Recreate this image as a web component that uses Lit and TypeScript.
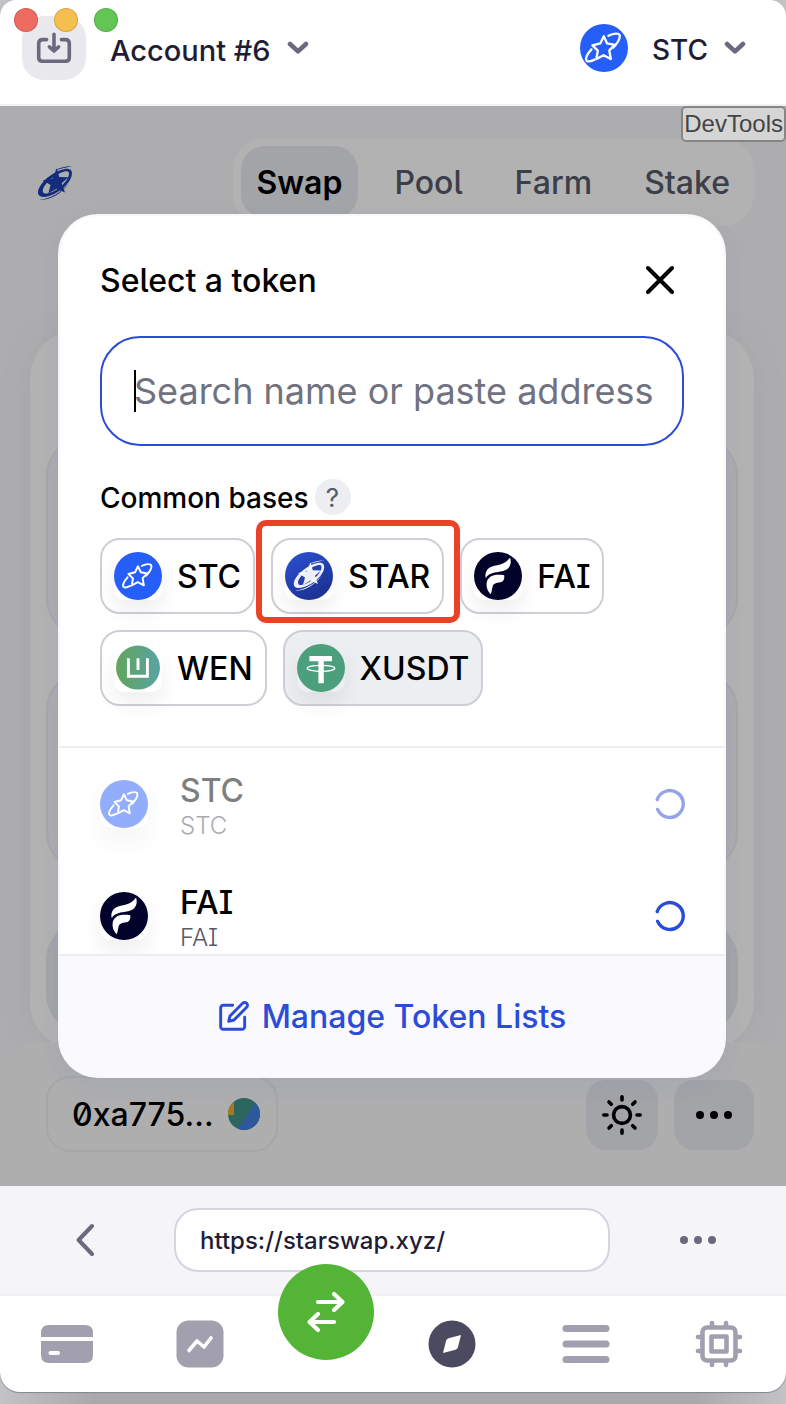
import { LitElement, html, css, svg } from "lit";
import { customElement, property } from "lit/decorators.js";
import { classMap } from "lit/directives/class-map.js";

type Token = "STC" | "STAR" | "FAI" | "WEN" | "XUSDT";

const starRing = svg`
  <path fill-rule="evenodd" d="M38.4 12.2C40.8 15.8 37.6 22.6 31.6 27.8C25.4 33.2 15.6 37.8 10.8 35.4C7 33.4 9 27.6 12.8 23.2C17.4 17.8 26 12 32.6 11C35.2 10.6 37.4 11 38.4 12.2ZM36 13.4C34 11.8 27.6 14.4 22 18.6C16 23.2 11.8 29 13.4 32C15 34.6 23.2 31.600 29 26.800C34.400 22.200 38 15.800 36 13.400Z"/>
  <path d="M10 38.6C20 37.800 30 31.800 36.600 23.600C30.400 32.800 20 39.400 10 38.600Z"/>
  <path d="M23 12.600C28 9.800 33.400 8.400 39.400 8.600C33.400 9.600 28 11 23 12.600Z"/>
  <path d="M25.600 10.500L27.800 18.200L36 18.400L30 23.800L33 32L25.400 28.600L18 33L20 25.400L13 21L21.600 19.600Z"/>`;

const orbit = svg`
  <g fill="none" stroke="#fff" stroke-width="2.3" stroke-linejoin="round" stroke-linecap="round">
    <path d="M23.8 12.2L27 19.3L34.8 20.9L29.3 26.4L30.8 35L23.6 31.2L16.4 35L17.8 26.6L12.4 21.4L20.3 19.4Z"/>
    <path d="M28.4 11.8C33.4 9.2 39.4 8.6 39.8 11.9C40.1 15 37.3 19.4 33.2 23.6"/>
    <path d="M11.4 25.4C7 30.2 4.8 35 6.8 36.8C8 37.8 11.4 37.2 14.6 35.6"/>
  </g>`;

@customElement("token-logo")
export class TokenLogo extends LitElement {
  static styles = css`
    :host { display: block; width: 48px; height: 48px; flex: none; }
    svg { display: block; width: 100%; height: 100%; }
  `;
  @property() token: Token = "STC";
  @property({ type: Boolean }) large = false;

  private art() {
    switch (this.token) {
      case "STC":
        return svg`<circle cx="24" cy="24" r="24" fill="#265ef9"/>
          ${this.large ? orbit : svg`<g transform="translate(4 4) scale(.84)">${orbit}</g>`}`;
      case "STAR":
        return svg`<defs><linearGradient id="g" x1="0.2" y1="0" x2="0.8" y2="1">
            <stop offset="0" stop-color="#2a4fce"/><stop offset="1" stop-color="#1a2f8d"/></linearGradient></defs>
          <circle cx="24" cy="24" r="24" fill="url(#g)"/><g fill="#fff" fill-opacity=".92">${starRing}</g>`;
      case "FAI":
        return svg`<circle cx="24" cy="24" r="24" fill="#02022a"/>
          <g fill="#fff">
            <path d="M36 5.4C37.4 9 36.8 13.4 34.4 16C31 19.6 26 19.4 20.4 20.6C16.4 21.6 13.4 23.4 11.8 26C10.6 21.6 12.2 17.6 16.2 15.2C20.8 12.6 31.4 13.4 36 5.4Z"/>
            <path d="M30.2 23.2C30.8 27 29.4 29.6 26.4 30.2C22 31 19.6 31.2 18.6 34.4C18 37 17.8 39.8 16.6 42.2C13.6 39.2 12.2 35.6 12.6 31.6C13 27.2 15.8 24.2 20 23.2C23.4 22.6 27 22.8 30.2 23.2Z"/>
          </g>`;
      case "WEN":
        return svg`<defs><linearGradient id="g"><stop offset="0" stop-color="#61a55c"/>
            <stop offset="1" stop-color="#58a3a2"/></linearGradient></defs>
          <circle cx="24" cy="23.6" r="22" fill="url(#g)"/>
          <path d="M14.4 14.2V32.2H33.4V14.2M24 14.2V26" fill="none" stroke="#fff" stroke-width="2.9"/>`;
      default:
        return svg`<circle cx="24" cy="24" r="24" fill="#4b9f7c"/>
          <g fill="#fff"><path d="M12.4 12H35V17.2H26.8V39.2H21.4V17.2H12.4Z"/></g>
          <ellipse cx="24" cy="24.3" rx="13.8" ry="3" fill="none" stroke="#fff" stroke-width="1.3"/>`;
    }
  }
  render() {
    return html`<svg viewBox="0 0 48 48" aria-hidden="true">${this.art()}</svg>`;
  }
}

@customElement("app-root")
export class AppRoot extends LitElement {
  static styles = css`
    :host {
      display: block;
      font-family: Inter, "Noto Sans", sans-serif;
      font-weight: 500;
      color: #000;
    }
    * { box-sizing: border-box; }
    button, input { font: inherit; color: inherit; margin: 0; }
    button { border: 0; background: none; padding: 0; cursor: pointer; font-feature-settings: inherit; }
    svg { display: block; flex: none; }
    h2, h3, p, ul { margin: 0; padding: 0; font-weight: 500; }

    .desktop {
      min-height: 100vh;
      padding-bottom: 12px;
      display: flex;
      background: linear-gradient(90deg, #c2c2c7, #a9a9ab 12%, #a9a9ab 88%, #c2c2c7);
    }
    .window {
      position: relative;
      flex: 1;
      min-width: 0;
      display: flex;
      flex-direction: column;
      background: #fff;
      border-radius: 16px 16px 20px 20px;
      overflow: hidden;
      box-shadow: 0 1px 1px #85858a;
    }
    .lights { position: absolute; left: 14px; top: 8px; display: flex; gap: 16px; }
    .light { width: 24px; height: 24px; border-radius: 50%; border: 1px solid #0002; }
    .red { background: #ed6b60; }
    .yellow { background: #f5bf4f; }
    .green { background: #62c655; }

    .topbar {
      height: 106px;
      padding: 16px 40px 24px 22px;
      display: flex;
      align-items: flex-start;
      justify-content: space-between;
      border-bottom: 2px solid #f1f0f4;
      color: #1f1d36;
      font-size: 28px;
    }
    .group { display: flex; align-items: center; height: 64px; gap: 24px; }
    .square {
      width: 64px; height: 64px; border-radius: 22px;
      background: #e9e8ec; display: grid; place-items: center;
    }
    .drop { display: flex; align-items: center; gap: 16px; height: 64px; padding-top: 4px; }
    .drop.account { font-size: 29px; }
    .drop svg { margin-bottom: 4px; }

    .webview {
      position: relative;
      flex: 1;
      min-height: 1080px;
      background: #f8f8fb;
      font-feature-settings: "ss02";
    }
    .site { display: flex; flex-direction: column; padding: 32px 32px 0 30px; gap: 104px; }
    .sitebar { display: flex; align-items: flex-start; justify-content: space-between; }
    .brand { margin: 26px 0 0 6px; }
    .tabs {
      display: flex; gap: 20px; height: 88px; padding: 8px; border-radius: 32px; background: #fff;
      font-size: 32px;
    }
    .tab {
      display: flex; align-items: center; padding: 0 16px; color: #565a69;
      text-decoration: none; border-radius: 24px;
    }
    .tab.on { background: #e9ebf0; color: #000; font-weight: 600; }
    .card {
      display: flex; flex-direction: column; gap: 32px;
      padding: 106px 16px 16px; border-radius: 48px; background: #fff;
      box-shadow: 0 0 40px #0000000d;
    }
    .pane { height: 202px; border-radius: 40px; border: 2px solid #edeef2; background: #f7f7fb; }
    .cta { height: 114px; margin-top: 16px; border-radius: 40px; background: #e9ebf0; }
    .sitefoot {
      position: absolute; left: 0; right: 0; bottom: 0; height: 144px;
      padding: 36px 32px 0 46px; display: flex; align-items: flex-start; gap: 16px;
      background: #f9f9fb; border-radius: 40px 40px 0 0;
    }
    .wallet {
      height: 76px; margin: -2px auto 0 0; padding: 0 16px 0 24px; display: flex; align-items: center; gap: 14px;
      border: 2px solid #edeef2; border-radius: 24px; font-size: 32px;
    }
    .tool {
      width: 72px; height: 70px; margin-top: 2px; border-radius: 20px; background: #e9ebf0;
      display: grid; place-items: center;
    }
    .tool.wide { width: 80px; }

    .scrim {
      position: absolute; inset: 0; padding-right: 2px; background: #0000004d;
      display: flex; align-items: center; justify-content: center;
    }
    .modal {
      width: 85.2%; height: 80%; min-height: 864px; display: flex; flex-direction: column;
      background: #fff; border: 2px solid #f7f8fa; border-radius: 40px; overflow: hidden;
      box-shadow: 0 8px 24px #2f50ed0d;
    }
    .head { padding: 40px; display: flex; flex-direction: column; }
    .titlerow { display: flex; align-items: center; justify-content: space-between; height: 48px; padding-right: 8px; }
    h2 { font-size: 32px; line-height: 48px; padding-top: 2px; }
    .search { position: relative; margin-top: 32px; }
    .search input {
      width: 100%; height: 110px; border: 2px solid #2b4bd9; border-radius: 40px;
      background: #fff; padding: 0 24px 0 32px; font-size: 36px; font-weight: 400; outline: none; display: block;
    }
    .search input::placeholder { color: #70727f; opacity: 1; }
    .caret { position: absolute; left: 34px; top: 34px; width: 2px; height: 42px; background: #000; }
    .bases { display: flex; align-items: center; gap: 6px; margin-top: 32px; height: 38px; }
    h3 { font-size: 28px; line-height: 36px; padding-top: 2px; }
    .help { width: 36px; height: 36px; border-radius: 50%; background: #edeef2; color: #565a69; font-size: 26px; font-weight: 400; display: grid; place-items: center; }
    .chips { display: flex; flex-wrap: wrap; gap: 16px; margin-top: 22px; }
    .chip {
      position: relative; display: flex; align-items: center; gap: 15px; height: 76px;
      padding: 0 12px; border: 2px solid #cdcfd7; border-radius: 20px; font-size: 32px; background: #fff;
    }
    .chip.chosen { background: #edeef2; }
    .shade { border-radius: 10px; box-shadow: 0 12px 20px #00000010; }
    .mark {
      position: absolute; inset: -20px -18px -11px -17px; border: 6px solid #eb4127;
      border-radius: 10px; pointer-events: none; z-index: 1;
    }
    .list { list-style: none; flex: 1 1 0; min-height: 0; overflow: hidden; border-top: 2px solid #edeef2; }
    .row { height: 112px; padding: 0 38px 0 40px; display: flex; align-items: center; gap: 32px; }
    .row.dim { opacity: 0.5; }
    .names { flex: 1; padding-top: 4px; }
    .sym { font-size: 32px; line-height: 40px; }
    .name { font-size: 24px; line-height: 30px; font-weight: 300; color: #565a69; }
    .manage {
      height: 122px; border-top: 2px solid #edeef2; background: #faf9fe; color: #2b4bd9;
      display: flex; align-items: center; justify-content: center; font-size: 32px; text-decoration: none; gap: 12px;
    }
    .devtools {
      position: absolute; right: 0; top: 0; height: 36px; padding: 0 1px; border: 2px solid #868686;
      border-radius: 5px; background: #d5d5d5; color: #444; font-family: "Liberation Sans", Arial, sans-serif;
      font-size: 24px; font-weight: 400; line-height: 32px;
    }

    .urlbar {
      display: grid; grid-template-columns: 174fr 436fr 176fr; align-items: center; height: 110px;
      background: #f5f5f8; border-bottom: 2px solid #f1f1f4;
    }
    .urlbar button { justify-self: center; }
    .url {
      width: 100%; height: 64px; border: 2px solid #d5d4df; border-radius: 24px; background: #fff;
      padding: 0 24px; font-size: 24px; color: #1f1d36; font-weight: 500;
    }
    .dock { display: grid; grid-template-columns: 134fr 134fr 118fr 134fr 134fr 134fr; height: 96px; }
    .dock button { display: grid; place-items: center; position: relative; }
    .dock .swap {
      width: 96px; height: 96px; margin-top: -32px; justify-self: center; border-radius: 50%; background: #53b436;
    }
  `;

  private chevron() {
    return html`<svg width="22" height="14" viewBox="0 0 22 14" fill="none" stroke="#6b6980" stroke-width="4.6"
      stroke-linecap="round" stroke-linejoin="round"><path d="M3 3L11 10.4L19 3"/></svg>`;
  }

  private chip(token: Token, chosen = false, marked = false) {
    return html`<button class=${classMap({ chip: true, chosen })}>
      <token-logo class="shade" token=${token}></token-logo>${token}
      ${marked ? html`<span class="mark"></span>` : ""}
    </button>`;
  }

  private row(token: Token, dim = false) {
    return html`<li class=${classMap({ row: true, dim })}>
      <token-logo class="shade" token=${token}></token-logo>
      <div class="names"><p class="sym">${token}</p><p class="name">${token}</p></div>
      <svg width="32" height="32" viewBox="0 0 32 32" fill="none" stroke="#2b4bd9" stroke-width="3.4" stroke-linecap="round">
        <path d="M3.2 11.6A13.4 13.4 0 1 1 3.6 21.4"/></svg>
    </li>`;
  }

  render() {
    return html`<div class="desktop"><div class="window">
      <header class="topbar">
        <div class="group">
          <button class="square" aria-label="Import">
            <svg width="36" height="32" viewBox="0 0 36 32" fill="none" stroke="#6b6980" stroke-width="3.6" stroke-linecap="round" stroke-linejoin="round">
              <path d="M10.6 7.6H6.6Q2.7 7.6 2.7 11.5V25.4Q2.7 29.3 6.6 29.3H29.4Q33.3 29.3 33.3 25.4V11.5Q33.3 7.6 29.4 7.6H25.4"/>
              <path d="M18 2.4V18.6M13.4 14.8L18 19L22.6 14.8"/></svg>
          </button>
          <button class="drop account">Account #6 ${this.chevron()}</button>
        </div>
        <div class="group">
          <token-logo token="STC" large></token-logo>
          <button class="drop">STC ${this.chevron()}</button>
        </div>
      </header>
      <div class="lights"><span class="light red"></span><span class="light yellow"></span><span class="light green"></span></div>

      <main class="webview">
        <div class="site">
          <div class="sitebar">
            <svg class="brand" width="38" height="38" viewBox="7 6.5 34 34" fill="#1f3fb4">${starRing}</svg>
            <nav class="tabs">
              <a class="tab on" href="#swap">Swap</a><a class="tab" href="#pool">Pool</a><a class="tab" href="#farm">Farm</a><a class="tab" href="#stake">Stake</a>
            </nav>
          </div>
          <div class="card"><div class="pane"></div><div class="pane"></div><div class="cta"></div></div>
        </div>
        <footer class="sitefoot">
          <button class="wallet">0xa775...
            <svg width="32" height="32" viewBox="0 0 32 32"><defs><clipPath id="c"><circle cx="16" cy="16" r="16"/></clipPath></defs>
              <g clip-path="url(#c)"><path fill="#3f9286" d="M0 0H32V32H0Z"/><path fill="#f3aa32" d="M-2 -2H6V17H-2Z"/><path fill="#417fe0" d="M30 1L8 33H34V1Z"/></g></svg>
          </button>
          <button class="tool" aria-label="Theme">
            <svg width="40" height="40" viewBox="0 0 40 40" fill="none" stroke="#000" stroke-width="3.6" stroke-linecap="round">
              <circle cx="20" cy="20" r="8.4"/>
              <path d="M20 1.8V5M20 35V38.2M1.8 20H5M35 20H38.2M7 7L9.3 9.3M30.7 30.7L33 33M7 33L9.3 30.7M30.7 9.3L33 7"/></svg>
          </button>
          <button class="tool wide" aria-label="More">
            <svg width="36" height="8" viewBox="0 0 36 8"><circle cx="4" cy="4" r="4"/><circle cx="18" cy="4" r="4"/><circle cx="32" cy="4" r="4"/></svg>
          </button>
        </footer>

        <div class="scrim">
          <section class="modal" role="dialog" aria-label="Select a token">
            <div class="head">
              <div class="titlerow"><h2>Select a token</h2>
                <button aria-label="Close"><svg width="32" height="32" viewBox="0 0 32 32" stroke="#000" stroke-width="4" stroke-linecap="round"><path d="M4 4L28 28M28 4L4 28"/></svg></button>
              </div>
              <div class="search">
                <input type="text" aria-label="Search name or paste address" placeholder="Search name or paste address">
                <span class="caret"></span>
              </div>
              <div class="bases"><h3>Common bases</h3><button class="help">?</button></div>
              <div class="chips">
                ${this.chip("STC")}${this.chip("STAR", false, true)}${this.chip("FAI")}${this.chip("WEN")}${this.chip("XUSDT", true)}
              </div>
            </div>
            <ul class="list">${this.row("STC", true)}${this.row("FAI")}</ul>
            <a class="manage" href="#lists">
              <svg width="32" height="32" viewBox="0 0 24 24" fill="none" stroke="#2b4bd9" stroke-width="2.2" stroke-linecap="round" stroke-linejoin="round">
                <path d="M11 4H4a2 2 0 0 0-2 2v14a2 2 0 0 0 2 2h14a2 2 0 0 0 2-2v-7"/><path d="M18.5 2.5a2.121 2.121 0 0 1 3 3L12 15l-4 1 1-4 9.5-9.5z"/></svg>
              Manage Token Lists</a>
          </section>
        </div>
        <button class="devtools">DevTools</button>
      </main>

      <div class="urlbar">
        <button aria-label="Back"><svg width="22" height="36" viewBox="0 0 22 36" fill="none" stroke="#6b6980" stroke-width="4" stroke-linecap="round" stroke-linejoin="round"><path d="M16 4L2.6 18L16 32"/></svg></button>
        <input class="url" type="text" aria-label="Address" value="https://starswap.xyz/">
        <button aria-label="Menu"><svg width="36" height="8" viewBox="0 0 36 8" fill="#6b6980"><circle cx="4" cy="4" r="4"/><circle cx="18" cy="4" r="4"/><circle cx="32" cy="4" r="4"/></svg></button>
      </div>
      <nav class="dock">
        <button aria-label="Wallet"><svg width="52" height="38" viewBox="0 0 52 38" fill="#a2a0ae">
          <path d="M0 12V8Q0 0 8 0H44Q52 0 52 8V12ZM0 16H52V30Q52 38 44 38H8Q0 38 0 30Z"/><path d="M9.5 28H17" stroke="#fff" stroke-width="4" stroke-linecap="round"/></svg></button>
        <button aria-label="Market"><svg width="48" height="48" viewBox="0 0 48 48"><rect x=".5" y=".5" width="47" height="47" rx="12" fill="#a2a0ae"/>
          <path d="M13 30.5L21 21L28 27L35 18" fill="none" stroke="#fff" stroke-width="3.6" stroke-linecap="round" stroke-linejoin="round"/></svg></button>
        <button class="swap" aria-label="Swap"><svg width="40" height="44" viewBox="0 0 40 44" fill="none" stroke="#fff" stroke-width="4.2" stroke-linecap="round" stroke-linejoin="round">
          <path d="M12 12H36M28 4L36.500 12L28 20M28 32H4M12 24L3.500 32L12 40"/></svg></button>
        <button aria-label="Explore"><svg width="48" height="48" viewBox="0 0 48 48"><circle cx="24" cy="24" r="23.5" fill="#4c4a60"/>
          <path d="M33 15L30 27Q29.500 29 27.500 29.800L15 33L18 21Q18.500 19 20.500 18.200Z" fill="#fff"/></svg></button>
        <button aria-label="List"><svg width="48" height="38" viewBox="0 0 48 38" stroke="#a2a0ae" stroke-width="7" stroke-linecap="round"><path d="M4 3.5H44M4 19H44M4 34.5H44"/></svg></button>
        <button aria-label="Settings"><svg width="48" height="48" viewBox="0 0 48 48" fill="none" stroke="#a2a0ae" stroke-width="4.6" stroke-linecap="round" stroke-linejoin="round">
          <rect x="7.5" y="7.5" width="33" height="33" rx="4.5"/><rect x="16.5" y="16.5" width="15" height="15"/>
          <path d="M17 3V6M31 3V6M17 42V45M31 42V45M3 17H6M3 31H6M42 17H45M42 31H45"/></svg></button>
      </nav>
    </div></div>`;
  }
}
